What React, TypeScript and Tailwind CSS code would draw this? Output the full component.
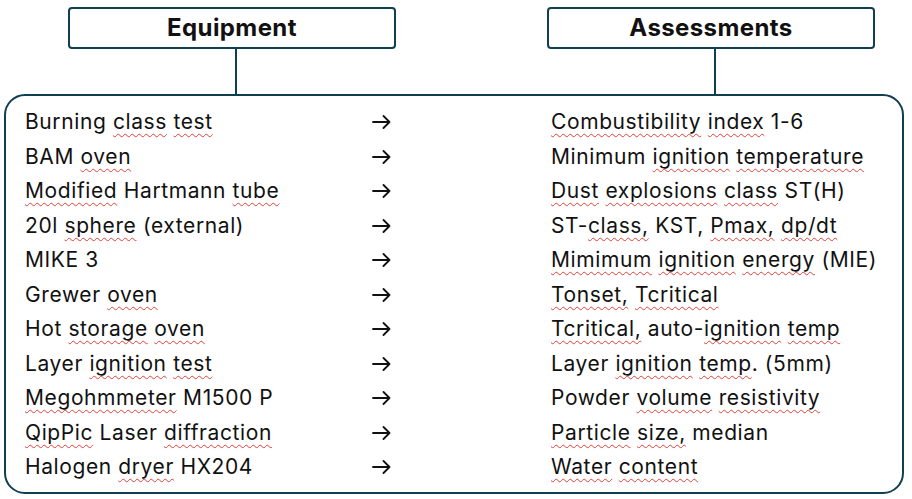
import React from "react";

// {word} = flagged by the spell checker (red wavy underline)
const rows: [string, string][] = [
  ["Burning {class} {test}", "{Combustibility} {index} 1-6"],
  ["BAM {oven}", "Minimum {ignition} {temperature}"],
  ["{Modified} Hartmann {tube}", "{Dust} {explosions} {class} ST(H)"],
  ["20l {sphere} (external)", "ST-{class,} KST, {Pmax,} {dp/dt}"],
  ["MIKE 3", "{Mimimum} {ignition} {energy} (MIE)"],
  ["Grewer {oven}", "{Tonset,} {Tcritical}"],
  ["Hot {storage} {oven}", "{Tcritical,} auto-{ignition} {temp}"],
  ["Layer {ignition} {test}", "Layer {ignition} {temp}. (5mm)"],
  ["{Megohmmeter} M1500 P", "Powder {volume} {resistivity}"],
  ["{QipPic} Laser {diffraction}", "{Particle} {size,} median"],
  ["Halogen {dryer} HX204", "{Water} {content}"],
];

function Marked({ text }: { text: string }) {
  const parts = text.split(/(\{[^}]+\})/).filter(Boolean);
  return (
    <span className="whitespace-nowrap">
      {parts.map((p, i) =>
        p.startsWith("{") ? (
          <span
            key={i}
            className="underline decoration-wavy decoration-[#e0403a] decoration-1 underline-offset-[4px] [text-decoration-skip-ink:none]"
          >
            {p.slice(1, -1)}
          </span>
        ) : (
          <span key={i}>{p}</span>
        )
      )}
    </span>
  );
}

function Arrow() {
  return (
    <svg width="19" height="14" viewBox="0 0 19 14" fill="none">
      <path d="M1 7H17.5M11.5 1L17.5 7L11.5 13" stroke="#111" strokeWidth="1.8" strokeLinecap="round" strokeLinejoin="round" />
    </svg>
  );
}

function HeaderCol({ title, className }: { title: string; className: string }) {
  return (
    <div className={className}>
      <div className="w-[328px] h-[42px] border-2 border-[#113f52] rounded-[4px] flex items-center justify-center text-[24px] font-bold tracking-[0.4px]">
        {title}
      </div>
      <div className="ml-[167px] w-[2px] h-[45px] bg-[#113f52]" />
    </div>
  );
}

export default function App() {
  return (
    <div className="w-[912px] h-[499px] bg-white text-[#111] font-['Inter',sans-serif] pt-[7px] overflow-hidden">
      <div className="flex">
        <HeaderCol title="Equipment" className="ml-[68px]" />
        <HeaderCol title="Assessments" className="ml-[151px]" />
      </div>

      <div className="ml-[4px] w-[900px] h-[400px] border-2 border-[#113f52] rounded-[21px] pt-[9px] pl-[19px]">
        {rows.map(([left, right], i) => (
          <div key={i} className="grid grid-cols-[347px_179px_1fr] items-center h-[34.5px] text-[21px] leading-[34.5px] tracking-[0.6px]">
            <Marked text={left} />
            <div className="flex items-center">
              <Arrow />
            </div>
            <Marked text={right} />
          </div>
        ))}
      </div>
    </div>
  );
}
